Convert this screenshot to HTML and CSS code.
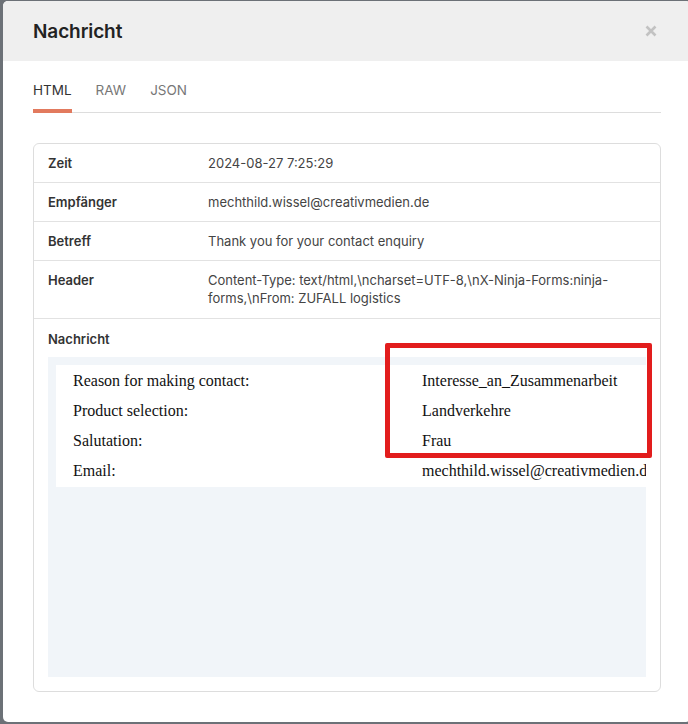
FILE: index.html
```html
<!DOCTYPE html>
<html lang="de">
<head>
    <meta charset="UTF-8">
    <meta name="viewport" content="width=device-width, initial-scale=1.0">
    <title>Nachricht</title>
    <link rel="stylesheet" href="styles.css">
</head>
<body>
    <div class="modal">
        <div class="modal-header">
            <h1>Nachricht</h1>
            <button class="close" aria-label="Schließen">
                <svg width="12" height="12" viewBox="0 0 12 12">
                    <path d="M1.5 1.5 L10.5 10.5 M10.5 1.5 L1.5 10.5" stroke="#c2c2c2" stroke-width="2.6" stroke-linecap="butt"/>
                </svg>
            </button>
        </div>
        <div class="modal-body">
            <div class="tabs">
                <a class="tab active" href="#">HTML</a>
                <a class="tab" href="#">RAW</a>
                <a class="tab" href="#">JSON</a>
            </div>
            <div class="card">
                <div class="row">
                    <div class="label">Zeit</div>
                    <div class="value">2024-08-27 7:25:29</div>
                </div>
                <div class="row">
                    <div class="label">Empfänger</div>
                    <div class="value">mechthild.wissel@creativmedien.de</div>
                </div>
                <div class="row">
                    <div class="label">Betreff</div>
                    <div class="value">Thank you for your contact enquiry</div>
                </div>
                <div class="row tall">
                    <div class="label">Header</div>
                    <div class="value">Content-Type: text/html,\ncharset=UTF-8,\nX-Ninja-Forms:ninja-forms,\nFrom: ZUFALL logistics</div>
                </div>
                <div class="message">
                    <div class="label">Nachricht</div>
                    <div class="frame">
                        <table class="mail">
                            <colgroup>
                                <col class="key-col">
                                <col>
                            </colgroup>
                            <tr><td>Reason for making contact:</td><td>Interesse_an_Zusammenarbeit</td></tr>
                            <tr><td>Product selection:</td><td>Landverkehre</td></tr>
                            <tr><td>Salutation:</td><td>Frau</td></tr>
                            <tr><td>Email:</td><td>mechthild.wissel@creativmedien.de</td></tr>
                        </table>
                    </div>
                </div>
            </div>
        </div>
    </div>
    <div class="highlight"></div>
</body>
</html>
```

FILE: styles.css
```css
body {
    font-family: Inter, "Noto Sans", Arial, sans-serif;
    margin: 0;
    padding: 0;
    background-color: #6c7177;
    overflow: hidden;
    position: relative;
    height: 724px;
}

.modal {
    margin: 1px 0 0 3px;
    width: 688px;
    height: 721px;
    background-color: #fff;
    border-radius: 5px;
    overflow: hidden;
    display: flex;
    flex-direction: column;
}

.modal-header {
    background-color: #efefef;
    height: 60px;
    flex-shrink: 0;
    padding: 0 30px;
    display: flex;
    align-items: center;
    justify-content: space-between;
}

.modal-header h1 {
    margin: 0;
    font-size: 19px;
    font-weight: 600;
    color: #222;
    letter-spacing: -0.1px;
}

.close {
    border: none;
    background: none;
    padding: 0;
    margin-right: 4px;
    width: 12px;
    height: 12px;
    display: flex;
    cursor: pointer;
}

.modal-body {
    padding: 20px 30px 30px;
    flex-grow: 1;
    min-height: 0;
    display: flex;
    flex-direction: column;
}

.tabs {
    display: flex;
    flex-shrink: 0;
    gap: 24px;
    border-bottom: 1px solid #ddd;
    margin-bottom: 30px;
}

.tab {
    font-size: 13.5px;
    line-height: 18px;
    color: #777;
    text-decoration: none;
    padding-bottom: 10px;
    border-bottom: 4px solid transparent;
    margin-bottom: -1px;
}

.tab.active {
    color: #333;
    border-bottom-color: #e27a5e;
}

.card {
    border: 1px solid #ddd;
    border-radius: 6px;
    flex-grow: 1;
    min-height: 0;
    display: flex;
    flex-direction: column;
}

.row {
    display: flex;
    padding: 10px 14px;
    border-bottom: 1px solid #e2e2e2;
    font-size: 13px;
    line-height: 18px;
}

.row.tall {
    padding-bottom: 11px;
}

.label {
    width: 160px;
    flex-shrink: 0;
    font-weight: 600;
    color: #333;
    font-size: 13px;
}

.value {
    color: #444;
    flex-grow: 1;
}

.message {
    padding: 11px 14px 0;
    line-height: 18px;
}

.message .label {
    margin-bottom: 9px;
}

.frame {
    height: 320px;
    box-sizing: border-box;
    background-color: #f1f5f9;
    padding: 8px;
    overflow: hidden;
}

.mail {
    background-color: #fff;
    border-spacing: 2px;
    table-layout: fixed;
    width: 680px;
    font-family: "Liberation Serif", "Times New Roman", serif;
    font-size: 16px;
    color: #111;
    white-space: nowrap;
}

.key-col {
    width: 347px;
}

.mail td {
    padding: 5px 15px;
    height: 18px;
    line-height: 18px;
    overflow: hidden;
}

.highlight {
    position: absolute;
    left: 385px;
    top: 343px;
    width: 257px;
    height: 105px;
    border: 5px solid #e21d1d;
    border-radius: 2px;
}
```
